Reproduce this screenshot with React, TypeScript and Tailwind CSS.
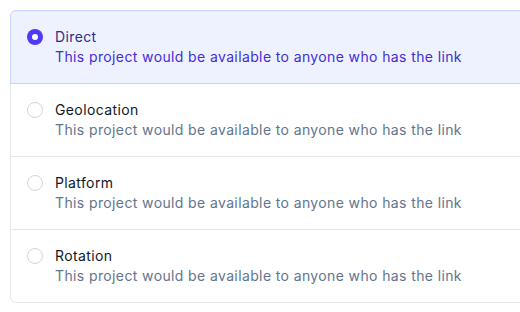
import { useState } from "react"

const options = [
  { name: "Direct", description: "This project would be available to anyone who has the link" },
  { name: "Geolocation", description: "This project would be available to anyone who has the link" },
  { name: "Platform", description: "This project would be available to anyone who has the link" },
  { name: "Rotation", description: "This project would be available to anyone who has the link" },
]

export default function App() {
  const [selected, setSelected] = useState("Direct")

  return (
    <div className="w-[520px] h-[312px] overflow-hidden bg-white pl-[10px] pt-[10px] font-['Inter',sans-serif] tracking-[0.38px]">
      <div className="w-[620px] rounded-md bg-white">
        {options.map((option, idx) => {
          const checked = selected === option.name
          return (
            <label
              key={option.name}
              onClick={() => setSelected(option.name)}
              className={`relative flex cursor-pointer border p-4 ${idx === 0 ? "rounded-tl-md" : ""} ${
                idx === options.length - 1 ? "rounded-bl-md" : ""
              } ${idx !== 0 ? "-mt-px" : ""} ${checked ? "z-10 border-indigo-200 bg-indigo-50" : "border-gray-200"}`}
            >
              <span
                className={`mt-0.5 flex h-4 w-4 shrink-0 items-center justify-center rounded-full border ${
                  checked ? "border-transparent bg-indigo-600" : "border-gray-300 bg-white"
                }`}
              >
                <span className={`h-1.5 w-1.5 rounded-full ${checked ? "bg-white" : "bg-transparent"}`} />
              </span>
              <span className="ml-3 flex flex-col">
                <span className={`text-sm leading-5 ${checked ? "text-indigo-900" : "text-gray-900"}`}>{option.name}</span>
                <span className={`text-sm leading-5 ${checked ? "text-indigo-700" : "text-slate-500"}`}>
                  {option.description}
                </span>
              </span>
            </label>
          )
        })}
      </div>
    </div>
  )
}
